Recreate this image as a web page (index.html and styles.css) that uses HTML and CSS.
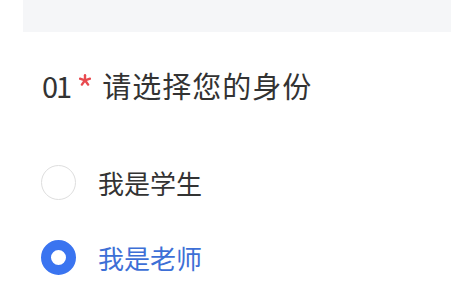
FILE: index.html
```html
<!DOCTYPE html>
<html lang="zh">
<head>
<meta charset="utf-8">
<link rel="stylesheet" href="styles.css">
</head>
<body>
<div class="topbar"></div>
<div class="question">
  <div class="title">
    <span class="num">01</span>
    <svg class="req" viewBox="0 0 12 12" width="12" height="12" aria-label="*"><g stroke="#e84a4f" stroke-width="2.4" stroke-linecap="round"><line x1="6" y1="6.3" x2="6" y2="1.2"/><line x1="6" y1="6.3" x2="11" y2="4.7"/><line x1="6" y1="6.3" x2="9.1" y2="10.6"/><line x1="6" y1="6.3" x2="2.9" y2="10.6"/><line x1="6" y1="6.3" x2="1" y2="4.7"/></g></svg>
    <span class="label">请选择您的身份</span>
  </div>
  <div class="options">
    <div class="option"><span class="radio"></span><span class="text">我是学生</span></div>
    <div class="option selected"><span class="radio"></span><span class="text">我是老师</span></div>
  </div>
</div>
</body>
</html>
```
FILE: styles.css
```css
html, body {
  margin: 0;
  padding: 0;
  background: #ffffff;
}
body {
  width: 451px;
  height: 284px;
  overflow: hidden;
  font-family: "Noto Sans CJK SC", "Noto Sans", sans-serif;
  color: #333333;
}
.topbar {
  margin-left: 23px;
  height: 32px;
  background: #f5f6f8;
}
.question {
  padding: 33px 0 0 42px;
}
.title {
  display: flex;
  align-items: baseline;
  height: 40px;
  line-height: 40px;
  font-size: 29px;
}
.num {
  letter-spacing: -2px;
}
.req {
  align-self: flex-start;
  margin: 9px 11px 0 9px;
  flex: none;
}
.label {
  letter-spacing: 1px;
}
.options {
  display: flex;
  flex-direction: column;
  gap: 40px;
  margin-top: 60px;
  margin-left: -1px;
}
.option {
  display: flex;
  align-items: center;
  gap: 22px;
  height: 35px;
}
.radio {
  box-sizing: border-box;
  width: 35px;
  height: 35px;
  border-radius: 50%;
  border: 1.5px solid #dedede;
  background: #ffffff;
}
.text {
  font-size: 26px;
  line-height: 35px;
}
.selected .radio {
  border: 10.5px solid #3a74f0;
}
.selected .text {
  color: #3d6fd6;
}
```
